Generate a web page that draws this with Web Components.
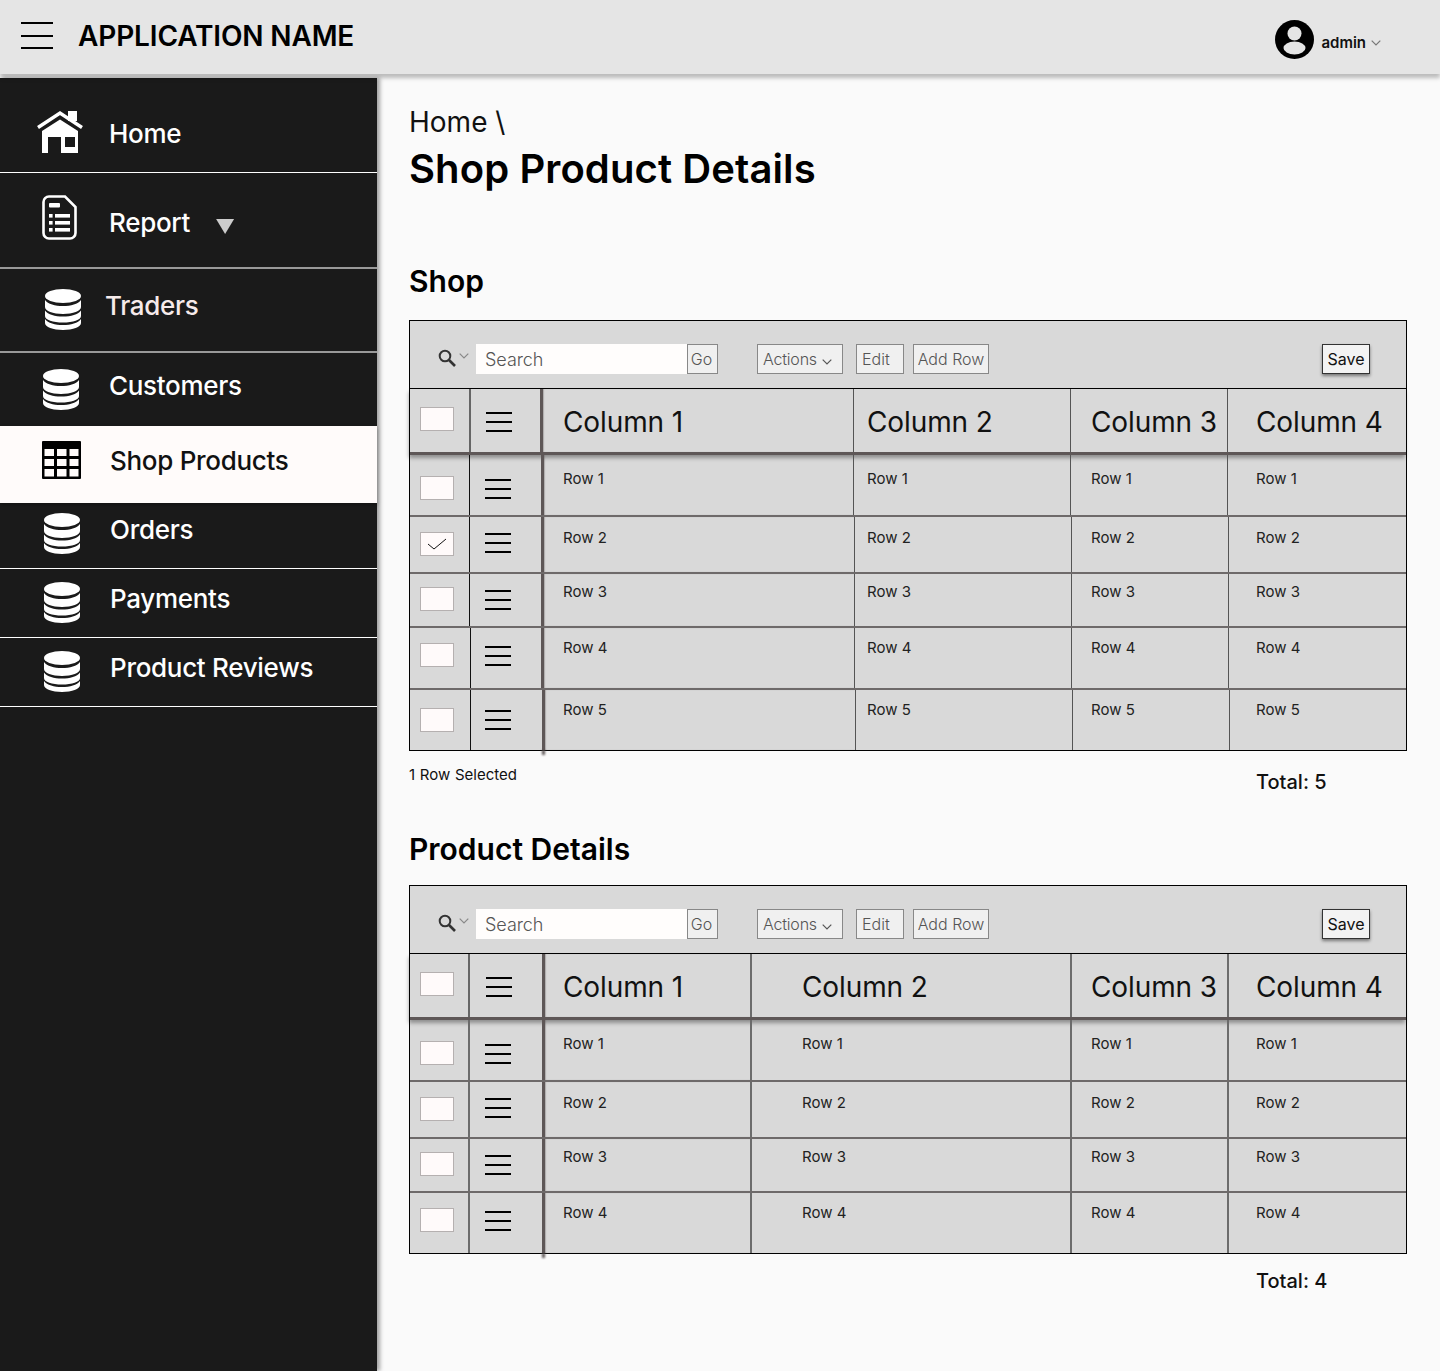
<!DOCTYPE html>
<html lang="en">
<head>
<meta charset="utf-8">
<title>Shop Product Details</title>
<style>
  html, body { margin: 0; height: 100%; }
  body { background: #fafafa; font-family: Inter, "Liberation Sans", sans-serif; color: #000; overflow: hidden; }
  .layout { display: flex; height: calc(100vh - 74px); }
</style>
</head>
<body>
<app-header></app-header>
<div class="layout">
  <side-nav>
    <nav-item h="94" line="1px solid #fff" ix="37" iy="32" tx="109" ty="40">
      <nav-icon slot="icon" name="home"></nav-icon>Home</nav-item>
    <nav-item h="94" line="2px solid #999" ix="42" iy="22" tx="109" ty="34" caret>
      <nav-icon slot="icon" name="report"></nav-icon>Report</nav-item>
    <nav-item h="82" line="2px solid #999" ix="45" iy="20" tx="105" ty="21" color="#f6eaea">
      <nav-icon slot="icon" name="db"></nav-icon>Traders</nav-item>
    <nav-item h="73" ix="43" iy="16" tx="109" ty="17">
      <nav-icon slot="icon" name="db"></nav-icon>Customers</nav-item>
    <nav-item h="77" ix="42" iy="15" tx="110" ty="19" active>
      <nav-icon slot="icon" name="table"></nav-icon>Shop Products</nav-item>
    <nav-item h="65" line="1px solid #fff" ix="44" iy="10" tx="110" ty="11">
      <nav-icon slot="icon" name="db"></nav-icon>Orders</nav-item>
    <nav-item h="68" line="1px solid #fff" ix="44" iy="13" tx="110" ty="14">
      <nav-icon slot="icon" name="db"></nav-icon>Payments</nav-item>
    <nav-item h="68" line="1px solid #fff" ix="44" iy="13" tx="110" ty="14">
      <nav-icon slot="icon" name="db"></nav-icon>Product Reviews</nav-item>
  </side-nav>
  <main-area>
    <page-title slot="title" crumb="Home \" heading="Shop Product Details"></page-title>

    <page-section style="--head-top: 70px; --head-gap: 21px; --foot-top: 19px">
      <span slot="title">Shop</span>
      <data-table id="shop"></data-table>
      <span slot="left">1 Row Selected</span>
      <span slot="total">Total: 5</span>
    </page-section>

    <page-section style="--head-top: 0px; --head-gap: 18px; --foot-top: 15px">
      <span slot="title">Product Details</span>
      <data-table id="details"></data-table>
      <span slot="total">Total: 4</span>
    </page-section>
  </main-area>
</div>

<script>
const ICONS = {
  home: `<svg width="46" height="43" viewBox="0 0 46 43" fill="#fff">
    <polyline points="1,17.5 23,3 45,17.5" fill="none" stroke="#fff" stroke-width="3.4"/>
    <rect x="31" y="1" width="9" height="10"/>
    <path fill-rule="evenodd" d="M5 21 23 9.5 41 21V43H24V27H11V43H5ZM28 27V37H38V27Z"/></svg>`,
  report: `<svg width="35" height="45" viewBox="0 0 35 45" fill="#fff">
    <path fill="none" stroke="#fff" stroke-width="2.6" d="M7 1.5H23L33.5 12V38A5.5 5.5 0 0 1 28 43.5H7A5.5 5.5 0 0 1 1.5 38V7A5.5 5.5 0 0 1 7 1.5Z"/>
    <rect x="7" y="8" width="11" height="4.5" rx="1"/>
    <rect x="7" y="19" width="3.6" height="3.6"/><rect x="13" y="19" width="15" height="3.6"/>
    <rect x="7" y="26" width="3.6" height="3.6"/><rect x="13" y="26" width="15" height="3.6"/>
    <rect x="7" y="33" width="3.6" height="3.6"/><rect x="13" y="33" width="15" height="3.6"/></svg>`,
  db: `<svg width="36" height="41" viewBox="0 0 36 41" fill="#fff">
    <ellipse cx="18" cy="7" rx="18" ry="7"/>
    <path d="M0 11C3 15 10 17 18 17S33 15 36 11V18C36 22 28 25 18 25S0 22 0 18Z"/>
    <path d="M0 21.500C3 25.500 10 27.500 18 27.500S33 25.500 36 21.500V27C36 31 28 33.500 18 33.500S0 31 0 27Z"/>
    <path d="M0 30C3 34 10 36 18 36S33 34 36 30V34C36 38 28 41 18 41S0 38 0 34Z"/></svg>`,
  table: `<svg width="39" height="38" viewBox="0 0 39 38">
    <rect width="39" height="38" rx="1"/>
    <g fill="#fffbfa">
      <rect x="2.500" y="8" width="9.500" height="7"/><rect x="15" y="8" width="9.500" height="7"/><rect x="27.500" y="8" width="9" height="7"/>
      <rect x="2.500" y="18" width="9.500" height="7"/><rect x="15" y="18" width="9.500" height="7"/><rect x="27.500" y="18" width="9" height="7"/>
      <rect x="2.500" y="28" width="9.500" height="7.500"/><rect x="15" y="28" width="9.500" height="7.500"/><rect x="27.500" y="28" width="9" height="7.500"/>
    </g></svg>`
};

class NavIcon extends HTMLElement {
  connectedCallback() {
    const shadow = this.shadowRoot || this.attachShadow({ mode: 'open' });
    shadow.innerHTML = `<style>:host { display: block; line-height: 0; }</style>${ICONS[this.getAttribute('name')]}`;
  }
}
customElements.define('nav-icon', NavIcon);

class AppHeader extends HTMLElement {
  constructor() {
    super();
    this.attachShadow({ mode: 'open' }).innerHTML = `
      <style>
        :host { display: flex; align-items: flex-start; height: 74px; background: #e5e5e5; box-shadow: 0 4px 4px rgba(0,0,0,.25); position: relative; z-index: 3; }
        .burger { margin: 22px 0 0 21px; width: 32px; height: 27px; display: flex; flex-direction: column; justify-content: space-between; }
        .burger i { display: block; height: 2px; background: #000; }
        h1 { margin: 18px 0 0 25px; font: 600 28px/36px Inter, sans-serif; letter-spacing: -.14px; flex: 1; }
        .user { display: flex; margin: 20px 59px 0 0; }
        .name { font: 600 15px/18px Inter, sans-serif; margin: 14px 0 0 7px; color: #111; }
        .chev { margin: 20px 0 0 5px; }
      </style>
      <div class="burger"><i></i><i></i><i></i></div>
      <h1>APPLICATION NAME</h1>
      <div class="user">
        <svg width="39" height="39" viewBox="0 0 39 39">
          <circle cx="19.500" cy="19.500" r="19.500"/>
          <circle cx="19.500" cy="13.500" r="7" fill="#e5e5e5"/>
          <ellipse cx="19.500" cy="28" rx="11" ry="6.500" fill="#e5e5e5"/>
        </svg>
        <span class="name">admin</span>
        <svg class="chev" width="10" height="6" viewBox="0 0 10 6"><path d="M.7.7 5 5 9.300.7" fill="none" stroke="#777" stroke-width="1.200"/></svg>
      </div>`;
  }
}
customElements.define('app-header', AppHeader);

class SideNav extends HTMLElement {
  constructor() {
    super();
    this.attachShadow({ mode: 'open' }).innerHTML = `
      <style>
        :host { display: block; flex: none; width: 377px; margin-top: 4px; background: #1a1a1a; box-shadow: 3px 0 4px rgba(0,0,0,.35); position: relative; z-index: 2; }
      </style>
      <slot></slot>`;
  }
}
customElements.define('side-nav', SideNav);

class NavItem extends HTMLElement {
  constructor() {
    super();
    const a = n => this.getAttribute(n);
    const active = this.hasAttribute('active');
    this.attachShadow({ mode: 'open' }).innerHTML = `
      <style>
        :host { display: flex; height: ${a('h')}px; box-sizing: content-box; border-bottom: ${a('line') || 'none'};
          background: ${active ? '#fffbfa' : 'transparent'}; color: ${active ? '#111' : (a('color') || '#fff')};
          font: 500 26px/32px Inter, sans-serif; letter-spacing: -.3px; position: relative; ${active ? 'box-shadow: 0 2px 4px rgba(0,0,0,.3);' : ''} }
        .icon { width: ${a('tx') - a('ix')}px; margin-left: ${a('ix')}px; padding-top: ${a('iy')}px; flex: none; box-sizing: border-box; }
        .text { padding-top: ${a('ty')}px; }
        .caret { width: 18px; height: 15px; margin: ${+a('ty') + 12}px 0 0 26px; background: #ccc; clip-path: polygon(0 0, 100% 0, 50% 100%); }
      </style>
      <div class="icon"><slot name="icon"></slot></div>
      <div class="text"><slot></slot></div>
      ${this.hasAttribute('caret') ? '<div class="caret"></div>' : ''}`;
  }
}
customElements.define('nav-item', NavItem);

class MainArea extends HTMLElement {
  constructor() {
    super();
    this.attachShadow({ mode: 'open' }).innerHTML = `
      <style>:host { display: block; flex: 1; padding: 31px 33px 0 32px; min-width: 0; }</style>
      <slot name="title"></slot><slot></slot>`;
  }
}
customElements.define('main-area', MainArea);

class PageTitle extends HTMLElement {
  constructor() {
    super();
    this.attachShadow({ mode: 'open' }).innerHTML = `
      <style>
        :host { display: block; }
        div { font: 400 28px/34px Inter, sans-serif; color: #111; }
        h1 { margin: 6px 0 0; font: 600 40px/48px Inter, sans-serif; letter-spacing: .1px; }
      </style>
      <div>${this.getAttribute('crumb')}</div>
      <h1>${this.getAttribute('heading')}</h1>`;
  }
}
customElements.define('page-title', PageTitle);

class PageSection extends HTMLElement {
  constructor() {
    super();
    this.attachShadow({ mode: 'open' }).innerHTML = `
      <style>
        :host { display: block; }
        h2 { margin: var(--head-top) 0 var(--head-gap); font: 600 30px/36px Inter, sans-serif; }
        .foot { display: flex; justify-content: space-between; height: 80px; }
        .left { font: 400 15px/18px Inter, sans-serif; margin-top: 15px; color: #111; word-spacing: .5px; }
        .total { font: 500 20px/24px Inter, sans-serif; margin-top: var(--foot-top, 19px); width: 151px; color: #111; }
      </style>
      <h2><slot name="title"></slot></h2>
      <slot></slot>
      <div class="foot">
        <div class="left"><slot name="left"></slot></div>
        <div class="total"><slot name="total"></slot></div>
      </div>`;
  }
}
customElements.define('page-section', PageSection);

const TABLE_LEFT = 410, TABLE_RIGHT = 1406;

class DataTable extends HTMLElement {
  constructor() {
    super();
    this.attachShadow({ mode: 'open' });
  }

  // cfg.textX = left edge of the text in columns 1-4, cfg.header / cfg.rows hold the row geometry
  render(cfg) {
    const grid = lines => {
      const xs = [TABLE_LEFT, ...lines, TABLE_RIGHT];
      return xs.slice(1).map((x, i) => (x - xs[i]) + 'px').join(' ');
    };
    const burger = (x, top) => `<div class="burger" style="margin:${top}px 0 0 ${x}px"><i></i><i></i><i></i></div>`;
    // border-box cells: the text starts after the cell's left border
    const pad = (lines, i) => cfg.textX[i] - lines[i + 1] - (i ? cfg.midWidth : 3);

    const head = cfg.header;
    const headHtml = `<div class="row head" style="grid-template-columns:${grid(head.lines)};height:${head.h}px">
        <div class="cell"><div class="box" style="margin-top:${head.box}px"></div></div>
        <div class="cell thin">${burger(486 - head.lines[0] - cfg.headLine, head.burger)}</div>
        ${[0, 1, 2, 3].map(i => `<div class="cell ${i ? 'mid' : 'thick'}" style="padding-left:${pad(head.lines, i)}px">Column ${i + 1}</div>`).join('')}
      </div>`;

    const rows = cfg.rows.map((r, n) => {
      const last = n === cfg.rows.length - 1;
      return `<div class="row ${last ? 'last' : ''}" style="grid-template-columns:${grid(r.lines)};height:${r.h}px">
        <div class="cell"><div class="box ${r.checked ? 'on' : ''}" style="margin-top:${r.box}px">${r.checked ? '<svg width="22" height="14" viewBox="0 0 22 14"><path d="M2 7l6 5L20 2" fill="none" stroke="#111" stroke-width="1"/></svg>' : ''}</div></div>
        <div class="cell rowline">${burger(485 - r.lines[0] - cfg.rowLine, r.burger)}</div>
        ${[0, 1, 2, 3].map(i => `<div class="cell ${i ? 'mid' : 'thick'}" style="padding:${r.text}px 0 0 ${pad(r.lines, i)}px">Row ${n + 1}</div>`).join('')}
      </div>`;
    }).join('');

    this.shadowRoot.innerHTML = `
      <style>
        :host { display: block; width: 998px; box-sizing: border-box; border: 1px solid #000; background: #d9d9d9; }
        .bar { display: flex; height: 67px; border-bottom: 1px solid #000; box-sizing: content-box; align-items: flex-start; font: 300 16px/20px Inter, sans-serif; color: #333; }
        .find { display: flex; margin: 28px 0 0 28px; width: 38px; }
        .find svg:last-child { margin: 4px 0 0 3px; }
        .input { width: 211px; height: 30px; margin: 23px 0 0 0; background: #fffdfc; padding: 5px 0 0 9px; box-sizing: border-box; font-size: 18px; line-height: 22px; color: #555; letter-spacing: -.05px; }
        .btn { height: 30px; margin-top: 23px; box-sizing: border-box; border: 1px solid #888; background: #f0f0f0; font-size: 16px; line-height: 28px; text-align: center; color: #555; white-space: nowrap; }
        .btn svg { margin-left: 1px; }
        .go { padding-right: 2px; }
        .actions { text-align: left; padding-left: 5px; letter-spacing: -.2px; }
        .save { border-color: #333; color: #111; font-weight: 400; box-shadow: 0 2px 3px rgba(0,0,0,.45); background: #f3f3f3; }
        .row { display: grid; box-sizing: content-box; border-bottom: 2px solid #6e6a6a; font: 400 15px/18px Inter, sans-serif; color: #222; }
        .row.last { border-bottom: none; }
        .row.head { border-bottom: 3px solid #5e5757; box-shadow: -1px 3px 4px rgba(0,0,0,.35); font-size: 28px; line-height: 34px; letter-spacing: -.1px; color: #111; position: relative; }
        .head .cell { padding-top: 16px; }
        .cell { box-sizing: border-box; min-width: 0; white-space: nowrap; position: relative; }
        .head .cell:nth-child(-n+2) { padding-top: 0; }
        .box { width: 34px; height: 24px; margin-left: 10px; box-sizing: border-box; border: 1px solid #b5b0b0; background: #fffafa; display: flex; align-items: center; justify-content: center; }
        .burger { width: 26px; height: 20px; display: flex; flex-direction: column; justify-content: space-between; }
        .burger i { display: block; height: 2px; background: #000; }
        .thin { border-left: ${cfg.headLine}px solid #666; }
        .rowline { border-left: ${cfg.rowLine}px solid ${cfg.rowLine > 1 ? '#6c6c6c' : '#111'}; }
        .mid { border-left: ${cfg.midWidth}px solid ${cfg.midWidth > 1 ? '#6c6c6c' : '#555'}; }
        .thick { border-left: 3px solid #5e5757; box-shadow: inset 1px 0 1px rgba(94,87,87,.35); }
        .last .thick::after { content: ''; position: absolute; left: -3px; width: 3px; bottom: -5px; height: 5px; background: #5e5757; filter: blur(.8px); }
      </style>
      <div class="bar">
        <div class="find">
          <svg width="18" height="18" viewBox="0 0 18 18"><circle cx="7" cy="7" r="5.300" fill="none" stroke="#333" stroke-width="2"/><path d="M11 11l6 6" stroke="#333" stroke-width="2.600"/></svg>
          <svg width="10" height="6" viewBox="0 0 10 6"><path d="M.7.7 5 5 9.300.7" fill="none" stroke="#888" stroke-width="1.200"/></svg>
        </div>
        <div class="input">Search</div>
        <div class="btn go" style="width:31px">Go</div>
        <div class="btn actions" style="width:86px;margin-left:39px">Actions <svg width="10" height="6" viewBox="0 0 10 6"><path d="M.7.7 5 5 9.300.7" fill="none" stroke="#555" stroke-width="1.200"/></svg></div>
        <div class="btn" style="width:48px;margin-left:13px;text-align:left;padding-left:5px">Edit</div>
        <div class="btn" style="width:76px;margin-left:9px">Add Row</div>
        <div class="btn save" style="width:48px;margin-left:333px">Save</div>
      </div>
      ${headHtml}
      ${rows}`;
  }
}
customElements.define('data-table', DataTable);

document.getElementById('shop').render({
  textX: [563, 867, 1091, 1256],
  midWidth: 1, headLine: 2, rowLine: 1,
  header: { lines: [469, 540, 853, 1070, 1227], h: 63, box: 18, burger: 23 },
  rows: [
    { h: 60, lines: [469, 541, 853, 1070, 1227], box: 21, burger: 24, text: 15 },
    { h: 55, lines: [469, 541, 854, 1071, 1228], box: 15, burger: 16, text: 12, checked: true },
    { h: 52, lines: [469, 541, 854, 1071, 1228], box: 13, burger: 16, text: 9 },
    { h: 60, lines: [470, 541, 854, 1071, 1228], box: 15, burger: 18, text: 11 },
    { h: 60, lines: [470, 542, 855, 1072, 1229], box: 18, burger: 20, text: 11 }
  ]
});
document.getElementById('details').render({
  textX: [563, 802, 1091, 1256],
  midWidth: 2, headLine: 2, rowLine: 2,
  header: { lines: [468, 542, 750, 1070, 1227], h: 63, box: 18, burger: 23 },
  rows: [
    { h: 60, lines: [468, 542, 750, 1070, 1227], box: 21, burger: 24, text: 15 },
    { h: 55, lines: [468, 542, 750, 1070, 1227], box: 15, burger: 16, text: 12 },
    { h: 52, lines: [468, 542, 750, 1070, 1227], box: 13, burger: 16, text: 9 },
    { h: 60, lines: [468, 542, 750, 1070, 1227], box: 15, burger: 18, text: 11 }
  ]
});
</script>
</body>
</html>
